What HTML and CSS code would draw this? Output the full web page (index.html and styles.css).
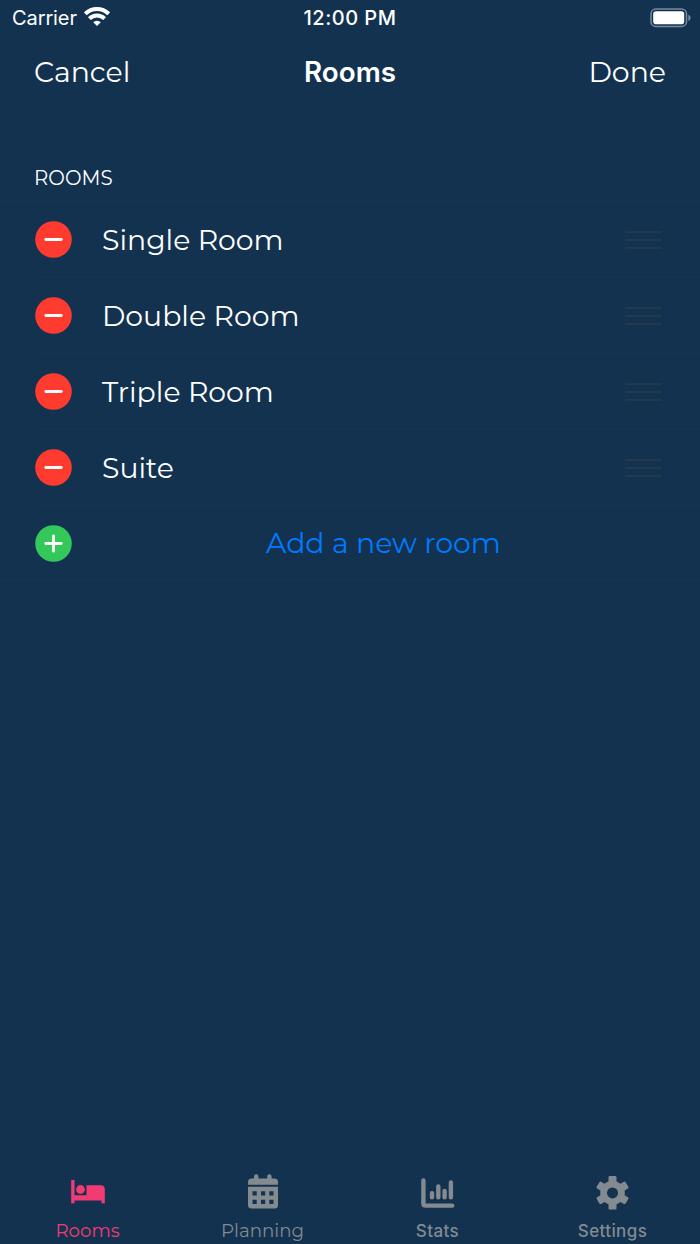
FILE: index.html
```html
<!DOCTYPE html>
<html lang="en">
<head>
    <meta charset="UTF-8">
    <meta name="viewport" content="width=device-width, initial-scale=1.0">
    <title>Rooms</title>
    <link rel="stylesheet" href="styles.css">
</head>
<body>
    <div class="status-bar">
        <div class="carrier">
            <span>Carrier</span>
            <svg width="26" height="20" viewBox="0 0 26 20" fill="none" stroke="white" stroke-width="4">
                <path d="M1.3 7.8a16.6 16.6 0 0 1 23.4 0"/>
                <path d="M5.4 12.6a10.8 10.8 0 0 1 15.2 0"/>
                <path d="M9.2 16.2a5.4 5.4 0 0 1 7.6 0L13 20z" fill="white" stroke="none"/>
            </svg>
        </div>
        <span class="clock">12:00 PM</span>
        <svg class="battery" width="42" height="20" viewBox="0 0 42 20">
            <rect x="1" y="1" width="35.5" height="17.5" rx="4.8" fill="none" stroke="#7b8b9c" stroke-width="1.5"/>
            <rect x="3.2" y="3.2" width="31" height="13" rx="2.8" fill="white"/>
            <path d="M38.3 6.7c3 1.2 3 5 0 6.2z" fill="#7b8b9c"/>
        </svg>
    </div>

    <div class="header">
        <a class="nav-button">Cancel</a>
        <h1 class="title">Rooms</h1>
        <a class="nav-button right">Done</a>
    </div>

    <h2 class="section-title">ROOMS</h2>
    <div class="room-list">
        <div class="room-item">
            <svg class="remove" viewBox="0 0 37 37"><circle cx="18.5" cy="18.5" r="18.3"/><path d="M10.8 18.5h15.4"/></svg>
            <span class="room-name">Single Room</span>
            <span class="handle"></span>
        </div>
        <div class="room-item">
            <svg class="remove" viewBox="0 0 37 37"><circle cx="18.5" cy="18.5" r="18.3"/><path d="M10.8 18.5h15.4"/></svg>
            <span class="room-name">Double Room</span>
            <span class="handle"></span>
        </div>
        <div class="room-item">
            <svg class="remove" viewBox="0 0 37 37"><circle cx="18.5" cy="18.5" r="18.3"/><path d="M10.8 18.5h15.4"/></svg>
            <span class="room-name">Triple Room</span>
            <span class="handle"></span>
        </div>
        <div class="room-item">
            <svg class="remove" viewBox="0 0 37 37"><circle cx="18.5" cy="18.5" r="18.3"/><path d="M10.8 18.5h15.4"/></svg>
            <span class="room-name">Suite</span>
            <span class="handle"></span>
        </div>
        <div class="room-item add">
            <svg class="plus" viewBox="0 0 37 37"><circle cx="18.5" cy="18.5" r="18.3"/><path d="M10.8 18.5h15.4M18.500 10.800v15.400"/></svg>
            <span class="add-label">Add a new room</span>
        </div>
    </div>

    <div class="tab-bar">
        <a class="tab active">
            <svg width="36" height="36" viewBox="0 0 36 36" fill="currentColor">
                <path d="M1.2 6h3.3v15.2h12V11.2h14.3a4 4 0 0 1 4 4v14h-3.3v-2.8h-27v2.8H1.2z"/>
                <circle cx="10.5" cy="15.5" r="4.4"/>
            </svg>
            <span>Rooms</span>
        </a>
        <a class="tab">
            <svg width="36" height="36" viewBox="0 0 36 36" fill="currentColor">
                <path d="M3 10.7V8q0-3.500 3.500-3.500H9v-2a2.200 2.200 0 0 1 4.400 0v2h8.800v-2a2.200 2.200 0 0 1 4.400 0v2h2.700Q33 4.500 33 8v2.700z"/>
                <path fill-rule="evenodd" d="M3 12.800h30V31q0 3.500-3.500 3.500h-23Q3 34.500 3 31zM7.500 17.200v4.200h4.200v-4.200zM16 17.200v4.200h4.200v-4.200zM24.300 17.200v4.200h4.200v-4.200zM7.500 25.700v4.200h4.200v-4.200zM16 25.700v4.200h4.200v-4.200zM24.300 25.700v4.200h4.200v-4.200z"/>
            </svg>
            <span>Planning</span>
        </a>
        <a class="tab">
            <svg width="36" height="36" viewBox="0 0 36 36" fill="none" stroke="currentColor" stroke-width="4.4" stroke-linecap="round" stroke-linejoin="round">
                <path d="M3.400 6.400v23q0 2.200 2.200 2.200h26.700"/>
                <path d="M12 19.300v4M18.300 12.500v10.800M24.600 17v6.300M30.900 8.500v14.800"/>
            </svg>
            <span class="plain">Stats</span>
        </a>
        <a class="tab">
            <svg width="36" height="36" viewBox="0 0 36 36" fill="currentColor">
                <path fill-rule="evenodd" d="M13.500 3.200q0-1.200 1.200-1.200h5.600q1.200 0 1.200 1.200v4.200q2.200.8 4 2.300l3.400-2q1-.5 1.700.5l2.800 4.600q.6 1-.5 1.600l-3.300 2q.4 2.400 0 4.800l3.300 2q1.100.6.5 1.600l-2.800 4.600q-.7 1-1.700.5l-3.400-2q-1.800 1.500-4 2.300v4.200q0 1.200-1.200 1.200h-5.600q-1.200 0-1.200-1.200v-4.200q-2.200-.8-4-2.300l-3.400 2q-1 .5-1.700-.5l-2.800-4.600q-.6-1 .5-1.600l3.300-2q-.4-2.400 0-4.800l-3.300-2q-1.100-.6-.5-1.600l2.800-4.600q.7-1 1.700-.5l3.400 2q1.800-1.500 4-2.300zM17.500 13.400a5.500 5.500 0 1 0 0 11 5.500 5.500 0 0 0 0-11z"/>
            </svg>
            <span class="plain">Settings</span>
        </a>
    </div>
</body>
</html>
```

FILE: styles.css
```css
* {
    box-sizing: border-box;
}
body {
    display: flex;
    flex-direction: column;
    height: 100vh;
    margin: 0;
    overflow: hidden;
    font-family: Montserrat, Inter, sans-serif;
    background-color: #123250;
    color: white;
}
.status-bar {
    display: grid;
    grid-template-columns: 1fr auto 1fr;
    align-items: center;
    height: 35px;
    padding: 0 8px 0 12px;
    font-family: Inter, sans-serif;
    font-size: 20px;
}
.carrier {
    display: flex;
    align-items: center;
    gap: 7px;
    letter-spacing: -0.1px;
}
.carrier svg {
    margin-bottom: 3px;
}
.clock {
    margin-right: 4px;
    font-weight: 500;
    letter-spacing: 0.5px;
}
.battery {
    justify-self: end;
}
.header {
    display: grid;
    grid-template-columns: 1fr auto 1fr;
    align-items: center;
    height: 73px;
    padding: 0 34px;
}
.nav-button {
    font-size: 28.4px;
}
.right {
    text-align: right;
}
.title {
    margin: 0;
    font-family: Inter, sans-serif;
    font-size: 27.8px;
    font-weight: 600;
}
.section-title {
    display: flex;
    align-items: flex-end;
    height: 93px;
    margin: 0;
    padding: 0 34px 11px;
    font-size: 19.8px;
    font-weight: 400;
}
.room-list {
    border-top: 1px solid #17354e;
}
.room-item {
    display: flex;
    align-items: center;
    height: 76px;
    margin-left: 35px;
    padding-right: 38px;
    border-bottom: 1px solid #17354e;
    font-size: 28.3px;
}
.room-item.add {
    height: 75px;
    margin-left: 0;
    padding-left: 35px;
}
.room-item svg {
    flex: none;
    width: 37px;
    height: 37px;
    stroke-linecap: round;
}
.room-item path {
    stroke: white;
    stroke-width: 2.8;
}
.remove {
    fill: #ff3b30;
}
.plus {
    fill: #34c759;
}
.room-name {
    flex-grow: 1;
    margin-left: 30px;
}
.handle {
    width: 37px;
    height: 18px;
    background: repeating-linear-gradient(#22384d 0 2px, transparent 2px 8px);
}
.add-label {
    margin-left: 194px;
    color: #007aff;
}
.tab-bar {
    display: grid;
    grid-template-columns: repeat(4, 1fr);
    height: 70px;
    margin-top: auto;
    color: #838a90;
    font-size: 18.2px;
}
.tab {
    display: flex;
    flex-direction: column;
    align-items: center;
    gap: 9px;
}
.plain {
    margin-top: 2px;
    font-family: Inter, sans-serif;
    font-size: 17px;
    font-weight: 500;
    letter-spacing: 0.4px;
}
.active {
    color: #f33b73;
}
```
